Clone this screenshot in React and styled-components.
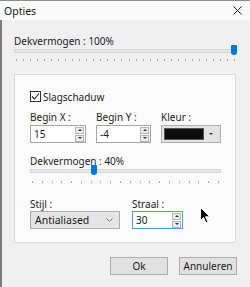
import styled, { createGlobalStyle } from 'styled-components';

const GlobalStyle = createGlobalStyle`
  body {
    margin: 0;
    background: #f0f0f0;
  }
  * {
    box-sizing: border-box;
  }
`;

const Window = styled.div`
  position: relative;
  width: 250px;
  height: 287px;
  overflow: hidden;
  background: #f0f0f0;
  border-top: 1px solid #8c8c8c;
  font-family: 'Noto Sans', 'Liberation Sans', sans-serif;
  font-size: 10px;
  color: #1b1b1b;
`;

const TitleBar = styled.div`
  height: 19px;
  display: flex;
  align-items: center;
  justify-content: space-between;
  padding: 0 8px 0 4px;
  background: #fafafa;
  font-size: 10.5px;
`;

const Body = styled.div`
  height: 267px;
  border-left: 2px solid #7d7d7d;
  padding: 15px 13px 0 12px;
`;

const FieldLabel = styled.div`
  line-height: 12px;
  white-space: nowrap;
`;

const SliderWrap = styled.div`
  position: relative;
  width: ${({ width }) => width}px;
  padding-top: 2px;
`;

const Track = styled.div`
  height: 4px;
  width: ${({ width }) => width}px;
  background: #e7e7e7;
  border: 1px solid #d6d6d6;
`;

const Thumb = styled.div`
  position: absolute;
  top: -2px;
  width: 6px;
  height: 10px;
  background: #0078d7;
  border-radius: 1px 1px 3px 3px;
`;

const Ticks = styled.div`
  display: flex;
  justify-content: space-between;
  width: ${({ width }) => width}px;
  margin-top: ${({ gap }) => gap}px;
  padding: 0 2px;
`;

const Tick = styled.span`
  width: 1px;
  height: 2px;
  background: ${({ active }) => (active ? '#e0a070' : '#aaaaaa')};
`;

const Panel = styled.div`
  margin-top: 13px;
  width: 222px;
  background: #fbfbfb;
  border: 1px solid #dcdcdc;
  padding: 16px 14px 13px 15px;
`;

const CheckRow = styled.label`
  display: flex;
  align-items: center;
  gap: 2px;
  height: 11px;
`;

const CheckBox = styled.span`
  width: 11px;
  height: 11px;
  border: 1px solid #333;
  background: #fff;
  display: flex;
  align-items: center;
  justify-content: center;
`;

const FieldsRow = styled.div`
  display: flex;
  gap: ${({ gap }) => gap}px;
  margin-top: ${({ top }) => top}px;
`;

const Field = styled.div`
  display: flex;
  flex-direction: column;
  gap: ${({ gap }) => (gap == null ? 2 : gap)}px;
  width: ${({ width }) => width}px;
`;

const SpinBox = styled.div`
  height: 18px;
  display: flex;
  align-items: center;
  background: #fff;
  border: 1px solid ${({ focused }) => (focused ? '#5a9bd5' : '#a6a6a6')};
  padding: 0 1px 0 3px;
`;

const SpinValue = styled.span`
  flex: 1;
`;

const SpinButtons = styled.div`
  display: flex;
  flex-direction: column;
  gap: 1px;
`;

const SpinButton = styled.div`
  width: 9px;
  height: 7px;
  background: #ececec;
  border: 1px solid #b5b5b5;
  display: flex;
  align-items: center;
  justify-content: center;
`;

const Arrow = styled.span`
  width: 0;
  height: 0;
  border-left: 2px solid transparent;
  border-right: 2px solid transparent;
  ${({ up }) =>
    up ? 'border-bottom: 2px solid #333;' : 'border-top: 2px solid #333;'}
`;

const ColorBox = styled.div`
  height: 18px;
  display: flex;
  align-items: stretch;
  padding: 2px;
  background: #e3e3e3;
  border: 1px solid #adadad;
`;

const Swatch = styled.div`
  flex: 1;
  background: #0d0d0d;
  border: 1px solid #555;
`;

const DropArea = styled.div`
  width: 14px;
  display: flex;
  align-items: center;
  justify-content: center;
`;

const Select = styled.div`
  height: 18px;
  display: flex;
  align-items: center;
  justify-content: space-between;
  padding: 0 6px 0 4px;
  background: #e5e5e5;
  border: 1px solid #adadad;
  font-size: 10.5px;
`;

const Footer = styled.div`
  display: flex;
  justify-content: flex-end;
  gap: 11px;
  margin-top: 14px;
  width: 223px;
`;

const Button = styled.button`
  width: 58px;
  height: 18px;
  padding: 0;
  background: #e1e1e1;
  border: 1px solid #adadad;
  font-family: inherit;
  font-size: 10px;
  color: #1b1b1b;
`;

const Cursor = styled.svg`
  position: absolute;
  left: 200px;
  top: 206px;
`;

const Slider = ({ width, value, ticks, gap }) => {
  const thumbLeft = Math.round((width - 6) * value);
  const activeIndex = Math.round((ticks - 1) * value);
  return (
    <SliderWrap width={width}>
      <Track width={value === 1 ? width - 5 : width} />
      <Thumb style={{ left: thumbLeft }} />
      <Ticks width={width} gap={gap}>
        {Array.from({ length: ticks }, (_, i) => (
          <Tick key={i} active={i === activeIndex} />
        ))}
      </Ticks>
    </SliderWrap>
  );
};

const Spin = ({ value, focused }) => (
  <SpinBox focused={focused}>
    <SpinValue>{value}</SpinValue>
    <SpinButtons>
      <SpinButton>
        <Arrow up />
      </SpinButton>
      <SpinButton>
        <Arrow />
      </SpinButton>
    </SpinButtons>
  </SpinBox>
);

const App = () => (
  <>
    <GlobalStyle />
    <Window>
      <TitleBar>
        <span>Opties</span>
        <svg width="9" height="9" viewBox="0 0 9 9">
          <path d="M0.5 0.5 L8.5 8.5 M8.5 0.5 L0.5 8.5" stroke="#222" strokeWidth="1" />
        </svg>
      </TitleBar>
      <Body>
        <FieldLabel>Dekvermogen : 100%</FieldLabel>
        <Slider width={223} value={1} ticks={32} gap={6} />

        <Panel>
          <CheckRow>
            <CheckBox>
              <svg width="9" height="9" viewBox="0 0 9 9">
                <path d="M1 4.5 L3.5 7 L8 1.5" fill="none" stroke="#222" strokeWidth="1.1" />
              </svg>
            </CheckBox>
            Slagschaduw
          </CheckRow>

          <FieldsRow gap={10} top={9}>
            <Field width={57}>
              <FieldLabel>Begin X :</FieldLabel>
              <Spin value="15" />
            </Field>
            <Field width={56}>
              <FieldLabel>Begin Y :</FieldLabel>
              <Spin value="-4" />
            </Field>
            <Field width={61}>
              <FieldLabel>Kleur :</FieldLabel>
              <ColorBox>
                <Swatch />
                <DropArea>
                  <Arrow />
                </DropArea>
              </ColorBox>
            </Field>
          </FieldsRow>

          <FieldsRow gap={0} top={12}>
            <Field width={191} gap={0}>
              <FieldLabel>Dekvermogen : 40%</FieldLabel>
              <Slider width={191} value={0.33} ticks={20} gap={8} />
            </Field>
          </FieldsRow>

          <FieldsRow gap={12} top={15}>
            <Field width={90} gap={1}>
              <FieldLabel>Stijl :</FieldLabel>
              <Select>
                Antialiased
                <svg width="7" height="4" viewBox="0 0 7 4">
                  <path d="M0.5 0.5 L3.5 3.5 L6.5 0.5" fill="none" stroke="#777" strokeWidth="1" />
                </svg>
              </Select>
            </Field>
            <Field width={51} gap={1}>
              <FieldLabel>Straal :</FieldLabel>
              <Spin value="30" focused />
            </Field>
          </FieldsRow>
        </Panel>

        <Footer>
          <Button>Ok</Button>
          <Button>Annuleren</Button>
        </Footer>
      </Body>
      <Cursor width="11" height="17" viewBox="0 0 11 17">
        <path d="M0.5 0.5 L0.5 13.5 L3.5 10.5 L6 16 L8 15 L5.5 9.8 L9.8 9.8 Z" fill="#000" stroke="#fff" strokeWidth="1" />
      </Cursor>
    </Window>
  </>
);

export default App;
